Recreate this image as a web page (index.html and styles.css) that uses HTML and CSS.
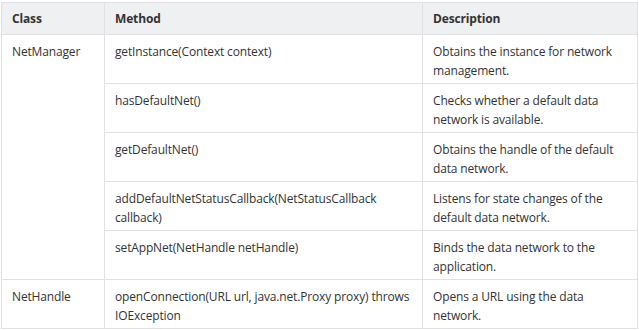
FILE: index.html
```html
<!DOCTYPE html>
<html lang="en">
<head>
  <meta charset="UTF-8">
  <title>Network APIs</title>
  <link rel="stylesheet" href="styles.css">
</head>
<body>
  <table class="api-table">
    <colgroup>
      <col class="col-class">
      <col class="col-method">
      <col class="col-desc">
    </colgroup>
    <thead>
      <tr>
        <th>Class</th>
        <th>Method</th>
        <th>Description</th>
      </tr>
    </thead>
    <tbody>
      <tr>
        <td rowspan="5">NetManager</td>
        <td>getInstance(Context context)</td>
        <td>Obtains the instance for network management.</td>
      </tr>
      <tr>
        <td>hasDefaultNet()</td>
        <td>Checks whether a default data network is available.</td>
      </tr>
      <tr>
        <td>getDefaultNet()</td>
        <td>Obtains the handle of the default data network.</td>
      </tr>
      <tr>
        <td>addDefaultNetStatusCallback(NetStatusCallback callback)</td>
        <td>Listens for state changes of the default data network.</td>
      </tr>
      <tr>
        <td>setAppNet(NetHandle netHandle)</td>
        <td>Binds the data network to the application.</td>
      </tr>
      <tr>
        <td>NetHandle</td>
        <td>openConnection(URL url, java.net.Proxy proxy) throws IOException</td>
        <td>Opens a URL using the data network.</td>
      </tr>
    </tbody>
  </table>
</body>
</html>
```

FILE: styles.css
```css
:root {
  --text-color: #333333;
  --border-color: #dfe1e4;
  --head-bg: #eff0f2;
}

body {
  margin: 0;
  padding: 2px 0 0 1px;
  background: #ffffff;
  font-family: 'Open Sans', sans-serif;
  color: var(--text-color);
}

.api-table {
  width: 636px;
  border-collapse: collapse;
  table-layout: fixed;
  font-size: 12px;
  line-height: 19px;
  letter-spacing: -0.15px;
}

.col-class { width: 103px; }
.col-method { width: 318px; }
.col-desc { width: 215px; }

.api-table th,
.api-table td {
  border: 1px solid var(--border-color);
  padding: 7px 5px 3px 10px;
  text-align: left;
  vertical-align: top;
}

.api-table th {
  background-color: var(--head-bg);
  font-weight: 700;
  padding: 6px 5px 6px 10px;
}
```
